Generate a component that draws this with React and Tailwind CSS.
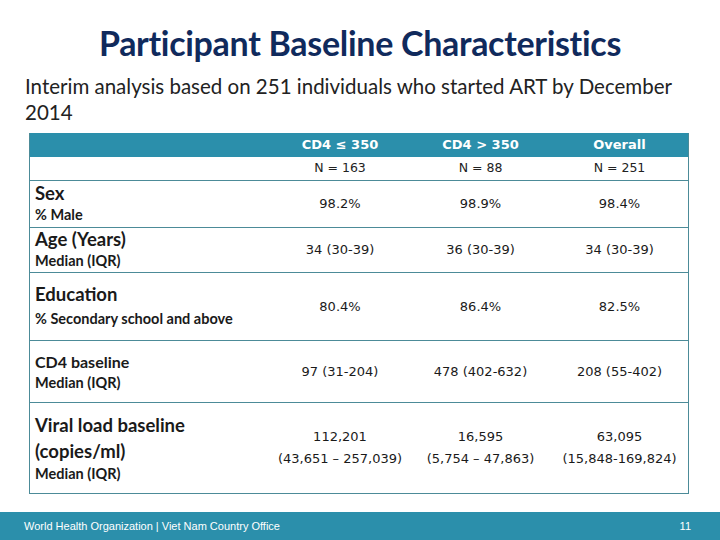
export default function App() {
  const rows = [
    {
      h: 'h-[47px]',
      labels: [
        { t: 'Sex', c: 'text-[18.5px] leading-[22px]' },
        { t: '% Male', c: 'text-[14.5px] leading-[22px]' },
      ],
      vals: [['98.2%'], ['98.9%'], ['98.4%']],
    },
    {
      h: 'h-[45px]',
      labels: [
        { t: 'Age (Years)', c: 'text-[18.5px] leading-[22px]' },
        { t: 'Median (IQR)', c: 'text-[14.5px] leading-[22px]' },
      ],
      vals: [['34 (30-39)'], ['36 (30-39)'], ['34 (30-39)']],
    },
    {
      h: 'h-[68px]',
      labels: [
        { t: 'Education', c: 'text-[18.5px] leading-[24px]' },
        { t: '% Secondary school and above', c: 'text-[14.5px] leading-[26px]' },
      ],
      vals: [['80.4%'], ['86.4%'], ['82.5%']],
    },
    {
      h: 'h-[62px]',
      labels: [
        { t: 'CD4 baseline', c: 'text-[16px] leading-[21px]' },
        { t: 'Median (IQR)', c: 'text-[14.5px] leading-[21px]' },
      ],
      vals: [['97 (31-204)'], ['478 (402-632)'], ['208 (55-402)']],
    },
    {
      h: 'h-[90px]',
      labels: [
        { t: 'Viral load baseline', c: 'text-[18.5px] leading-[26px]' },
        { t: '(copies/ml)', c: 'text-[18.5px] leading-[26px]' },
        { t: 'Median (IQR)', c: 'text-[14.5px] leading-[20px]' },
      ],
      vals: [
        ['112,201', '(43,651 \u2013 257,039)'],
        ['16,595', '(5,754 \u2013 47,863)'],
        ['63,095', '(15,848-169,824)'],
      ],
    },
  ];

  const dataFont = { fontFamily: '"DejaVu Sans", Verdana, sans-serif' };

  return (
    <div className="w-[720px] h-[540px] bg-white flex flex-col overflow-hidden relative">
      <div
        className="flex-1 flex flex-col"
        style={{ fontFamily: 'Lato, "Open Sans", sans-serif' }}
      >
        <h1 className="pt-[23px] text-center text-[34px] leading-[40px] font-bold text-[#102a5c] tracking-[-0.3px]">
          Participant Baseline Characteristics
        </h1>
        <p className="mt-[10px] pl-[25px] text-[20.5px] leading-[26px] text-[#222]">
          Interim analysis based on 251 individuals who started ART by December
          <br />
          2014
        </p>
        <div className="mt-[8px] ml-[29px] w-[660px] border-x border-b border-[#4c8b98]">
          <div className="grid grid-cols-[240px_140px_141px_137px] h-[24px] bg-[#2b8fab] text-white items-center">
            <div />
            {['CD4 \u2264 350', 'CD4 > 350', 'Overall'].map((t) => (
              <div key={t} className="text-center text-[13px] font-bold" style={dataFont}>
                {t}
              </div>
            ))}
          </div>
          <div className="grid grid-cols-[240px_140px_141px_137px] h-[24px] items-center border-b border-[#4c8b98] text-[#222]">
            <div />
            {['N = 163', 'N = 88', 'N = 251'].map((t) => (
              <div key={t} className="text-center text-[12.5px]" style={dataFont}>
                {t}
              </div>
            ))}
          </div>
          {rows.map((r, i) => (
            <div
              key={i}
              className={`grid grid-cols-[240px_140px_141px_137px] ${r.h} items-center text-[#1a1a1a] ${
                i < rows.length - 1 ? 'border-b border-[#4c8b98]' : ''
              }`}
            >
              <div className="pl-[5px] flex flex-col font-bold">
                {r.labels.map((l, j) => (
                  <div key={j} className={l.c}>
                    {l.t}
                  </div>
                ))}
              </div>
              {r.vals.map((v, j) => (
                <div key={j} className="text-center text-[13px] leading-[22px]" style={dataFont}>
                  {v.map((line, k) => (
                    <div key={k}>{line}</div>
                  ))}
                </div>
              ))}
            </div>
          ))}
        </div>
      </div>
      <div
        className="h-[28px] bg-[#2b8fab] flex items-center justify-between pl-[24px] pr-[29px] text-white text-[11px]"
        style={{ fontFamily: '"Liberation Sans", Arial, sans-serif' }}
      >
        <span>World Health Organization | Viet Nam Country Office</span>
        <span>11</span>
      </div>
    </div>
  );
}
